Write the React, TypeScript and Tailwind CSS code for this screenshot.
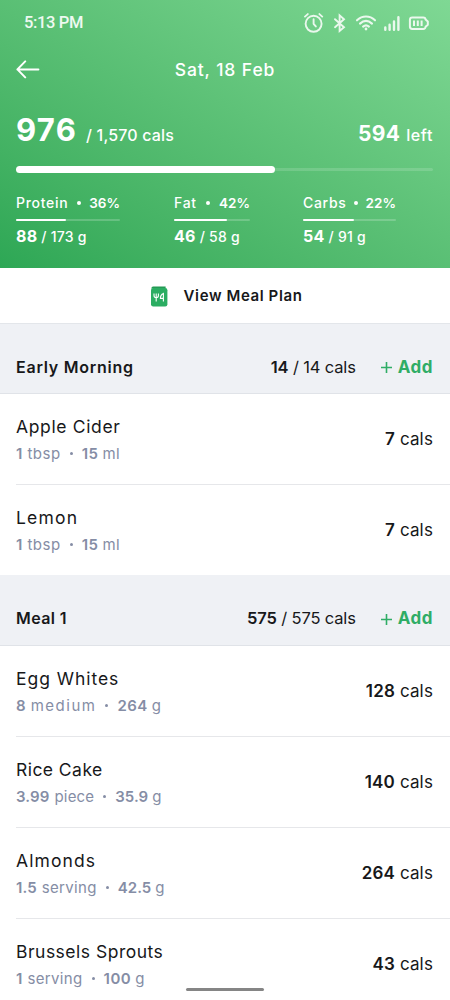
import React from 'react';

interface Food {
  name: string;
  nameClass: string;
  qty: string;
  unit: string;
  weight: string;
  weightUnit: string;
  cals: number;
}

interface Meal {
  title: string;
  titleClass: string;
  headClass: string;
  eaten: number;
  total: number;
  foods: Food[];
}

const meals: Meal[] = [
  {
    title: 'Early Morning',
    titleClass: 'tracking-[0.75px]',
    headClass: 'h-[70px]',
    eaten: 14,
    total: 14,
    foods: [
      { name: 'Apple Cider', nameClass: 'tracking-[0.65px]', qty: '1', unit: 'tbsp', weight: '15', weightUnit: 'ml', cals: 7 },
      { name: 'Lemon', nameClass: 'tracking-[1.2px]', qty: '1', unit: 'tbsp', weight: '15', weightUnit: 'ml', cals: 7 },
    ],
  },
  {
    title: 'Meal 1',
    titleClass: 'tracking-[0.4px]',
    headClass: 'h-[71px]',
    eaten: 575,
    total: 575,
    foods: [
      { name: 'Egg Whites', nameClass: 'tracking-[0.95px]', qty: '8', unit: 'medium', weight: '264', weightUnit: 'g', cals: 128 },
      { name: 'Rice Cake', nameClass: 'tracking-[0.45px]', qty: '3.99', unit: 'piece', weight: '35.9', weightUnit: 'g', cals: 140 },
      { name: 'Almonds', nameClass: 'tracking-[1.1px]', qty: '1.5', unit: 'serving', weight: '42.5', weightUnit: 'g', cals: 264 },
      { name: 'Brussels Sprouts', nameClass: 'tracking-[0.5px]', qty: '1', unit: 'serving', weight: '100', weightUnit: 'g', cals: 43 },
    ],
  },
];

const macros = [
  { label: 'Protein', percent: 36, eaten: 88, goal: 173, fill: 48, width: 'w-[104px]' },
  { label: 'Fat', percent: 42, eaten: 46, goal: 58, fill: 70, width: 'w-[76px]' },
  { label: 'Carbs', percent: 22, eaten: 54, goal: 91, fill: 55, width: 'w-[93px]' },
];

const unitTracking: Record<string, string> = {
  tbsp: 'tracking-[0.5px]',
  medium: 'tracking-[1.5px]',
  serving: 'tracking-[0.35px]',
  piece: 'tracking-[0.2px]',
};

const StatusIcons: React.FC = () => (
  <svg width="126" height="22" viewBox="0 0 126 22" fill="none" stroke="white" strokeLinecap="round" strokeLinejoin="round" className="opacity-85">
    {/* alarm */}
    <circle cx="9.6" cy="11.8" r="8" strokeWidth="1.9" />
    <path d="M9.6 7.3v4.5l2.2 2.6M1 4.6l2.8-2.5M18.2 4.6l-2.8-2.5" strokeWidth="1.9" />
    {/* bluetooth */}
    <path d="M31 7.2l9 8-4.4 3.8V3.4L40 7.2l-9 8" strokeWidth="1.9" strokeLinejoin="miter" />
    {/* wifi */}
    <path d="M53 8.3c5.3-5 12.7-5 18 0M56 11.6c3.7-3.3 8.3-3.3 12 0M59.1 14.6c1.8-1.6 4-1.6 5.8 0" strokeWidth="2.1" />
    <circle cx="62" cy="17" r="1.4" fill="white" stroke="none" />
    {/* signal */}
    <path d="M81.3 15.4v2.4M85.6 12.8v5M90 9.4v8.4M94.4 5.2v12.6" strokeWidth="2.4" />
    {/* battery */}
    <path d="M108.3 5.4h10.9c1.5 0 2.3.8 2.4 2.2l2.2 2v3.2l-2.2 2c-.1 1.4-.9 2.2-2.4 2.2h-10.9c-1.6 0-2.4-.9-2.4-2.4V7.8c0-1.5.8-2.4 2.4-2.4z" strokeWidth="2" />
    <path d="M110 8.4v5.6M113.8 8.4v5.6M117.6 8.4v5.6" strokeWidth="2" strokeLinecap="butt" />
  </svg>
);

const BackIcon: React.FC = () => (
  <svg width="24" height="20" viewBox="0 0 24 20" fill="none" stroke="white" strokeWidth="2" strokeLinecap="round" strokeLinejoin="round">
    <path d="M22.4 9.4H1.4M9.2 1.4l-7.8 8 7.8 8" />
  </svg>
);

const MealPlanIcon: React.FC = () => (
  <svg width="18" height="22" viewBox="0 0 18 22" fill="none">
    <path d="M3.2 .6H15.6v2H1.4C1.4 1.4 2 .6 3.2 .6z" fill="#249a55" />
    <rect x="1" y="2" width="16.4" height="18.4" rx="2.2" fill="#2bad62" />
    <path d="M4 7.4v2.2c0 2.8 4.4 2.8 4.4 0V7.4M6.2 7.4v8M13.4 15.4v-8c-1.8.7-3 2.4-3 5h3" stroke="white" strokeWidth="1.1" />
  </svg>
);

const Dot: React.FC<{ className?: string }> = ({ className = '' }) => (
  <span className={`inline-block rounded-full bg-current align-middle ${className}`} />
);

const Summary: React.FC = () => (
  <header className="flex h-[268px] flex-col bg-linear-to-tr from-[#2da755] to-[#7fd894] text-white">
    <div className="flex h-[46px] items-center justify-between pr-5 pl-6">
      <span className="font-[Roboto] text-[16.5px] font-medium tracking-[-0.35px] text-white/90">5:13 PM</span>
      <StatusIcons />
    </div>
    <div className="grid h-12 grid-cols-[1fr_auto_1fr] items-center px-4">
      <BackIcon />
      <h1 className="text-[17.5px] font-medium tracking-[0.9px]">Sat, 18 Feb</h1>
    </div>
    <div className="flex items-baseline pt-4 pr-[17px] pl-4 leading-10">
      <span className="text-[31px] font-bold tracking-[1.3px]">976</span>
      <span className="ml-[9px] text-base font-medium tracking-[0.15px]">/ 1,570 cals</span>
      <span className="ml-auto text-[21px] font-bold tracking-[0.3px]">594</span>
      <span className="ml-1.5 text-base font-medium tracking-[0.6px]">left</span>
    </div>
    <div className="mt-3 mr-[17px] ml-4 flex h-[7px] items-center">
      <div className="h-[7px] w-[62%] rounded-full bg-white" />
      <div className="h-[3px] flex-1 rounded-r-full bg-white/15" />
    </div>
    <div className="grid grid-cols-[158px_129px_1fr] px-4 pt-5">
      {macros.map((macro) => (
        <div key={macro.label} className={macro.width}>
          <div className="flex items-center justify-between text-sm leading-5">
            <span className="font-medium tracking-[0.7px]">{macro.label}</span>
            <Dot className="size-1" />
            <span className="text-[13.5px] font-semibold">{macro.percent}%</span>
          </div>
          <div className="mt-1.5 h-0.5 rounded-full bg-white/20">
            <div className="h-0.5 rounded-full bg-white" style={{ width: `${macro.fill}%` }} />
          </div>
          <div className="mt-[3px] text-sm leading-6 font-medium tracking-[0.25px] whitespace-nowrap">
            <span className="text-base font-bold">{macro.eaten}</span> / {macro.goal} g
          </div>
        </div>
      ))}
    </div>
  </header>
);

const FoodRow: React.FC<{ food: Food }> = ({ food }) => (
  <li className="ml-4 flex h-[91px] items-center justify-between border-b border-[#e6e7ea] pr-[17px] last:h-[90px] last:border-b-0">
    <div>
      <h3 className={`text-[17.5px] leading-6 ${food.nameClass}`}>{food.name}</h3>
      <p className="mt-[5px] flex items-center text-[15px] leading-5 text-[#858da5]">
        <span className="font-semibold tracking-[0.1px]">{food.qty}</span>
        <span className={`ml-[5px] ${unitTracking[food.unit]}`}>{food.unit}</span>
        <Dot className="mx-[9px] size-[3px]" />
        <span className={`font-semibold ${food.weight.includes('.') ? '' : 'tracking-[0.5px]'}`}>{food.weight}</span>
        <span className="ml-1 tracking-[0.3px]">{food.weightUnit}</span>
      </p>
    </div>
    <span className="pt-0.5 text-[17px] tracking-[0.15px]">
      <b className="font-semibold">{food.cals}</b> cals
    </span>
  </li>
);

const MealSection: React.FC<{ meal: Meal }> = ({ meal }) => (
  <section>
    <div className={`flex items-center border-b border-[#e0e3e8] bg-[#eff1f5] pt-4 pr-[17px] pl-4 ${meal.headClass}`}>
      <h2 className={`text-base font-semibold ${meal.titleClass}`}>{meal.title}</h2>
      <span className="ml-auto pt-px text-[16.5px] tracking-[-0.15px]">
        <b className="font-semibold">{meal.eaten}</b> / {meal.total} cals
      </span>
      <button className="ml-6 flex items-center gap-[5px] pt-0.5 text-[17px] font-bold tracking-[0.5px] text-[#2fad66]">
        <svg width="13" height="13" viewBox="0 0 13 13" stroke="currentColor" strokeWidth="1.6">
          <path d="M6.5 1v11M1 6.5h11" />
        </svg>
        Add
      </button>
    </div>
    <ul>
      {meal.foods.map((food) => (
        <FoodRow key={food.name} food={food} />
      ))}
    </ul>
  </section>
);

export default function App() {
  return (
    <div className="relative h-[1000px] w-[450px] overflow-hidden bg-white font-[Inter,sans-serif] text-[#17181a]">
      <Summary />
      <button className="flex h-14 w-full items-center justify-center gap-4 border-b border-[#e3e6ea] pt-0.5 pl-0.5 text-[15px] font-semibold tracking-[0.6px]">
        <MealPlanIcon />
        View Meal Plan
      </button>
      {meals.map((meal) => (
        <MealSection key={meal.title} meal={meal} />
      ))}
      <div className="absolute bottom-[9px] left-[186px] h-[3px] w-[78px] rounded-full bg-[#858585]" />
    </div>
  );
}
